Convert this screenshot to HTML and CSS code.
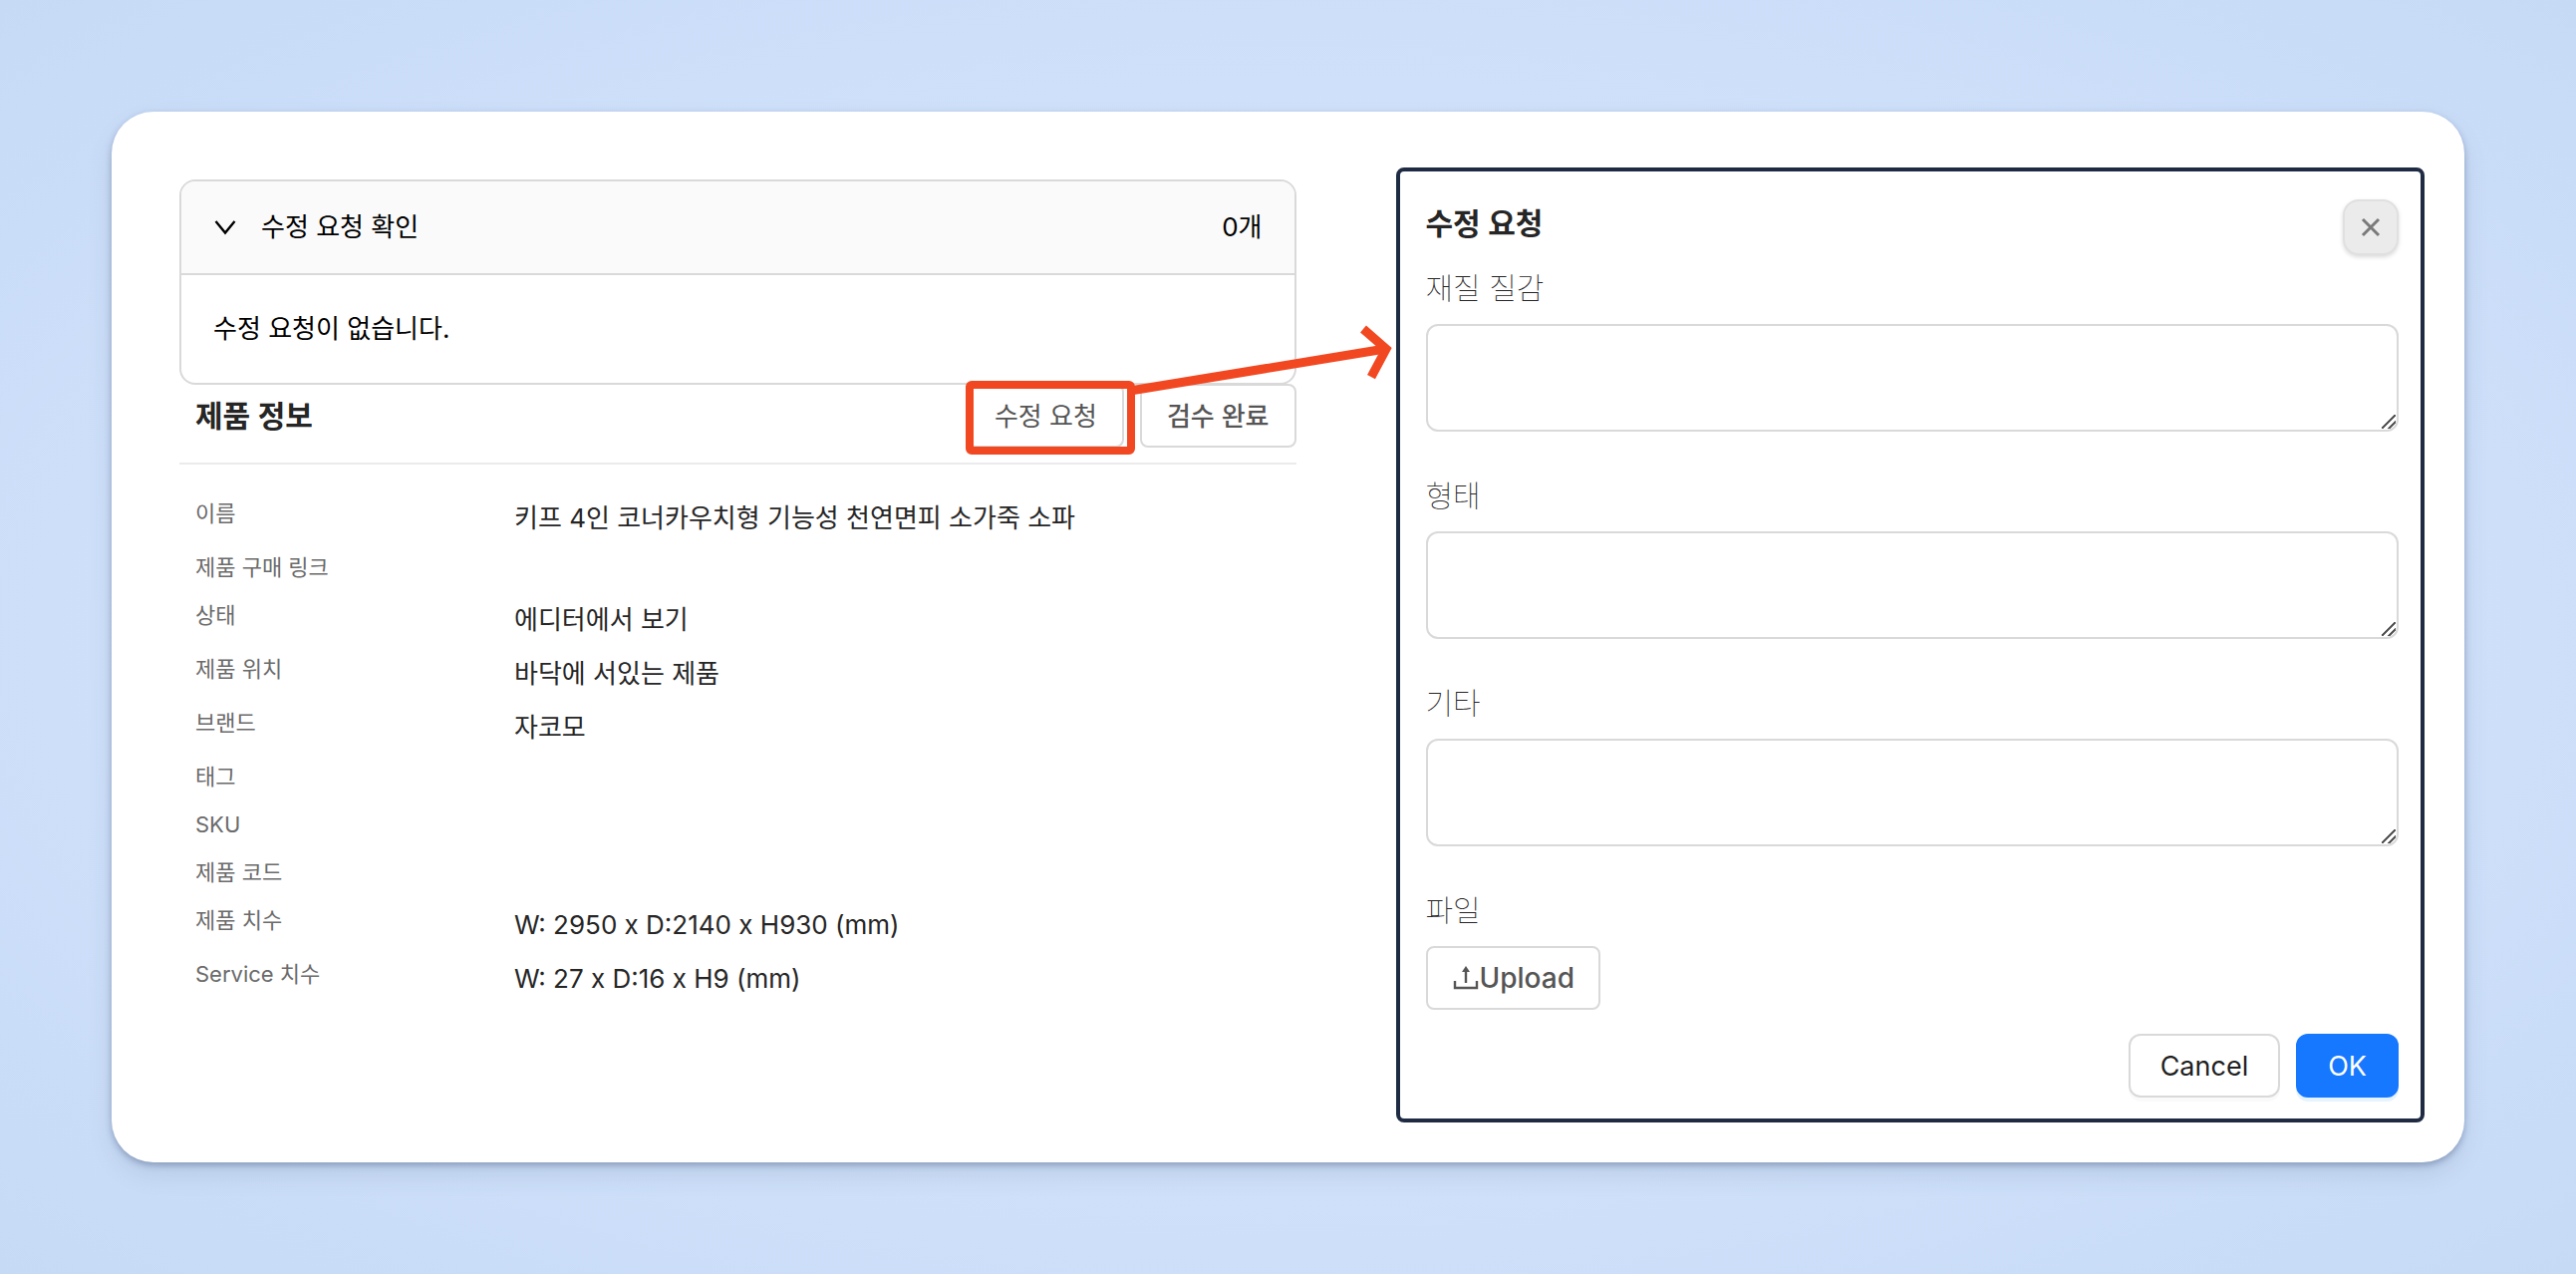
FILE: index.html
```html
<!DOCTYPE html>
<html lang="ko">
<head>
    <meta charset="UTF-8">
    <meta name="viewport" content="width=device-width, initial-scale=1.0">
    <title>수정 요청</title>
    <link rel="stylesheet" href="styles.css">
</head>
<body>
    <main class="card">
        <section class="product">
            <details class="collapse" open>
                <summary class="collapse-header">
                    <svg class="chevron" viewBox="0 0 24 24" width="24" height="24" aria-hidden="true">
                        <path d="M2.5 6 L12 17.5 L21.5 6"/>
                    </svg>
                    <span class="collapse-title">수정 요청 확인</span>
                    <span>0개</span>
                </summary>
                <p class="collapse-body">수정 요청이 없습니다.</p>
            </details>

            <div class="product-header">
                <h2>제품 정보</h2>
                <div class="actions">
                    <div class="marked">
                        <button type="button" class="btn">수정 요청</button>
                        <!-- highlight frame and arrow to the request form -->
                        <span class="marked-frame"></span>
                        <svg class="marked-arrow" viewBox="0 0 264 64" width="264" height="64" aria-hidden="true">
                            <path d="M0 69 L256 27"/>
                            <path d="M234 7 L257 27 L242 55"/>
                        </svg>
                    </div>
                    <button type="button" class="btn btn-done">검수 완료</button>
                </div>
            </div>

            <table class="info">
                <tr><th scope="row">이름</th><td>키프 4인 코너카우치형 기능성 천연면피 소가죽 소파</td></tr>
                <tr><th scope="row">제품 구매 링크</th><td></td></tr>
                <tr><th scope="row">상태</th><td>에디터에서 보기</td></tr>
                <tr><th scope="row">제품 위치</th><td>바닥에 서있는 제품</td></tr>
                <tr><th scope="row">브랜드</th><td>자코모</td></tr>
                <tr><th scope="row">태그</th><td></td></tr>
                <tr><th scope="row">SKU</th><td></td></tr>
                <tr><th scope="row">제품 코드</th><td></td></tr>
                <tr><th scope="row">제품 치수</th><td>W: 2950 x D:2140 x H930 (mm)</td></tr>
                <tr><th scope="row">Service 치수</th><td>W: 27 x D:16 x H9 (mm)</td></tr>
            </table>
        </section>

        <form class="modal">
            <div class="modal-header">
                <h2>수정 요청</h2>
                <button type="button" class="close-btn" aria-label="닫기">
                    <svg viewBox="0 0 20 20" width="20" height="20" aria-hidden="true">
                        <path d="M2 2 L18 18 M18 2 L2 18"/>
                    </svg>
                </button>
            </div>

            <div class="form-group">
                <label for="material">재질 질감</label>
                <textarea id="material"></textarea>
            </div>

            <div class="form-group">
                <label for="shape">형태</label>
                <textarea id="shape"></textarea>
            </div>

            <div class="form-group">
                <label for="etc">기타</label>
                <textarea id="etc"></textarea>
            </div>

            <div class="form-group">
                <label for="upload">파일</label>
                <button type="button" id="upload" class="btn btn-upload">
                    <svg viewBox="0 0 28 28" width="28" height="28" aria-hidden="true">
                        <path d="M3 17 V24 H25 V17 M14 19 V6"/>
                        <path class="fill" d="M14 2 L18 8 H10 Z"/>
                    </svg>Upload
                </button>
            </div>

            <div class="modal-footer">
                <button type="button" class="btn btn-cancel">Cancel</button>
                <button type="submit" class="btn btn-ok">OK</button>
            </div>
        </form>
    </main>
</body>
</html>
```
FILE: styles.css
```css
:root {
    --line: #d9d9d9;
    --text: #262626;
    --muted: #6b6b6b;
    --navy: #1e2b42;
    --primary: #1677ff;
    --mark: #f24822;
}

* {
    margin: 0;
    padding: 0;
    box-sizing: border-box;
}

body {
    min-height: 100vh;
    padding: 112px;
    background: radial-gradient(ellipse at center, #d6e5fd 30%, #c6daf6 100%);
    font-family: Inter, "Noto Sans CJK KR", sans-serif;
    font-size: 26px;
    color: var(--text);
}

button,
textarea {
    font: inherit;
}

h2 {
    font-size: 30px;
    line-height: 48px;
    font-weight: 600;
}

.card {
    display: grid;
    grid-template-columns: 1120fr 1032fr;
    gap: 100px;
    padding: 56px 40px 40px 68px;
    background: white;
    border-radius: 42px;
    box-shadow: 0 3px 6px rgba(50, 70, 110, 0.35), 0 12px 24px rgba(50, 70, 110, 0.12);
}

/* product info */

.product {
    padding-top: 12px;
}

.collapse {
    border: 2px solid var(--line);
    border-radius: 16px;
    overflow: hidden;
    color: black;
}

.collapse-header {
    display: flex;
    align-items: center;
    gap: 24px;
    padding: 24px 32px;
    line-height: 44px;
    background: #fafafa;
    cursor: pointer;
}

.collapse-title {
    flex: 1;
}

.collapse-body {
    padding: 32px;
    line-height: 44px;
    border-top: 2px solid var(--line);
}

.chevron {
    fill: none;
    stroke: black;
    stroke-width: 2.4;
}

.product-header {
    display: flex;
    justify-content: space-between;
    align-items: center;
    margin-top: -1px;
    padding: 0 0 15px 16px;
    border-bottom: 2px solid #ebebeb;
}

.actions {
    display: flex;
    gap: 16px;
}

.btn {
    height: 64px;
    padding: 0 25px 3px;
    border: 2px solid var(--line);
    border-radius: 8px;
    background: white;
    color: #555;
    cursor: pointer;
}

.btn-done {
    font-weight: 500;
}

.marked {
    position: relative;
}

.marked-frame {
    position: absolute;
    inset: -3px -11px -7px -2px;
    border: 8px solid var(--mark);
    border-radius: 6px;
}

.marked-arrow {
    position: absolute;
    left: 100%;
    bottom: 100%;
    margin: 0 0 -2px 6px;
    overflow: visible;
    fill: none;
    stroke: var(--mark);
    stroke-width: 9;
}

.info {
    width: 100%;
    margin-top: 30px;
    border-collapse: collapse;
    text-align: left;
}

.info th,
.info td {
    vertical-align: top;
}

.info th {
    width: 336px;
    padding: 0 0 10px 16px;
    font-size: 22px;
    font-weight: 400;
    line-height: 38px;
    color: var(--muted);
}

.info td {
    padding-bottom: 6px;
    line-height: 48px;
}

/* request form */

.modal {
    padding: 28px 22px 21px 26px;
    border: 4px solid var(--navy);
    border-radius: 8px;
}

.modal-header {
    display: flex;
    justify-content: space-between;
    align-items: flex-start;
    margin-bottom: 9px;
}

.close-btn {
    display: flex;
    align-items: center;
    justify-content: center;
    width: 56px;
    height: 56px;
    border: 2px solid #e0e0e0;
    border-radius: 16px;
    background: #ebebeb;
    box-shadow: 0 2px 4px rgba(0, 0, 0, 0.15);
    cursor: pointer;
}

.close-btn svg {
    stroke: #7a7a7a;
    stroke-width: 3;
}

.form-group {
    margin-bottom: 40px;
}

.form-group label {
    display: block;
    margin-bottom: 12px;
    font-size: 30px;
    font-weight: 100;
    line-height: 48px;
}

.form-group textarea {
    display: block;
    width: 100%;
    height: 108px;
    padding: 8px 22px;
    border: 2px solid var(--line);
    border-radius: 12px;
    resize: vertical;
}

.form-group textarea::-webkit-scrollbar {
    width: 16px;
    height: 16px;
}

.form-group textarea::-webkit-resizer {
    background: linear-gradient(135deg, transparent 46%, #555 46%, #555 54%, transparent 54%, transparent 71%, #555 71%, #555 79%, transparent 79%) left top / 14px 14px no-repeat;
}

.btn-upload {
    display: flex;
    align-items: center;
    padding: 0 24px;
    font-size: 28px;
    font-weight: 500;
}

.btn-upload svg {
    fill: none;
    stroke: #555;
    stroke-width: 2.4;
}

.btn-upload .fill {
    fill: #555;
    stroke: none;
}

.modal-footer {
    display: flex;
    justify-content: flex-end;
    gap: 16px;
    margin-top: -16px;
}

.btn-cancel,
.btn-ok {
    padding: 0 30px;
    border-radius: 12px;
    font-size: 27px;
}

.btn-cancel {
    color: #1f1f1f;
    box-shadow: 0 4px 0 rgba(0, 0, 0, 0.02);
}

.btn-ok {
    border-color: var(--primary);
    background: var(--primary);
    color: white;
    box-shadow: 0 4px 0 rgba(5, 145, 255, 0.1);
}
```
